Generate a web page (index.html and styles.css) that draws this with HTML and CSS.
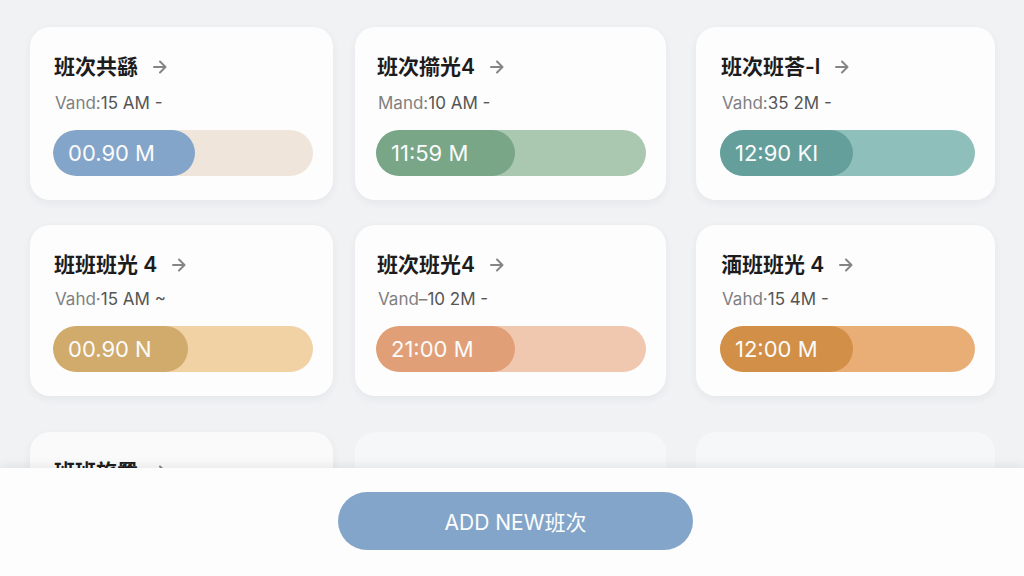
FILE: index.html
```html
<!DOCTYPE html>
<html lang="zh">
<head>
    <meta charset="UTF-8">
    <meta name="viewport" content="width=device-width, initial-scale=1.0">
    <title>班次</title>
    <link rel="stylesheet" href="styles.css">
</head>
<body>

    <svg class="sprite" aria-hidden="true">
        <symbol id="arrow" viewBox="0 0 14 14">
            <path d="M1 7h11M7 1.500l5.500 5.500l-5.500 5.500" fill="none" stroke="currentColor" stroke-width="2" stroke-linecap="round" stroke-linejoin="round"/>
        </symbol>
    </svg>

    <main class="shifts">
        <section class="shift-row">
            <article class="shift-card">
                <h2>班次共繇 <a href="#shift-1" aria-label="Open"><svg><use href="#arrow"/></svg></a></h2>
                <p class="meta">Vand:<span>15 AM -</span></p>
                <div class="bar blue"><div class="fill" style="width: 54.6%">00.90 M</div></div>
            </article>
            <article class="shift-card">
                <h2>班次擶光4 <a href="#shift-2" aria-label="Open"><svg><use href="#arrow"/></svg></a></h2>
                <p class="meta">Mand:<span>10 AM -</span></p>
                <div class="bar green"><div class="fill" style="width: 51.3%">11:59 M</div></div>
            </article>
            <article class="shift-card">
                <h2>班次班荅-l <a href="#shift-3" aria-label="Open"><svg><use href="#arrow"/></svg></a></h2>
                <p class="meta">Vahd:<span>35 2M -</span></p>
                <div class="bar teal"><div class="fill" style="width: 52%">12:90 KI</div></div>
            </article>
        </section>

        <section class="shift-row compact">
            <article class="shift-card">
                <h2>班班班光 4 <a href="#shift-4" aria-label="Open"><svg><use href="#arrow"/></svg></a></h2>
                <p class="meta">Vahd·<span>15 AM ~</span></p>
                <div class="bar gold"><div class="fill" style="width: 52%">00.90 N</div></div>
            </article>
            <article class="shift-card">
                <h2>班次班光4 <a href="#shift-5" aria-label="Open"><svg><use href="#arrow"/></svg></a></h2>
                <p class="meta">Vand–<span>10 2M -</span></p>
                <div class="bar coral"><div class="fill" style="width: 51.3%">21:00 M</div></div>
            </article>
            <article class="shift-card">
                <h2>湎班班光 4 <a href="#shift-6" aria-label="Open"><svg><use href="#arrow"/></svg></a></h2>
                <p class="meta">Vahd·<span>15 4M -</span></p>
                <div class="bar orange"><div class="fill" style="width: 52%">12:00 M</div></div>
            </article>
        </section>

        <section class="shift-row upcoming">
            <article class="shift-card">
                <h2>班班旅羀 <a href="#shift-7" aria-label="Open"><svg><use href="#arrow"/></svg></a></h2>
            </article>
            <article class="shift-card empty"></article>
            <article class="shift-card empty"></article>
        </section>
    </main>

    <footer class="action-bar">
        <button type="button" class="add-btn">ADD NEW班次</button>
    </footer>

</body>
</html>
```

FILE: styles.css
```css
* {
    box-sizing: border-box;
}

body {
    margin: 0;
    height: 100vh;
    display: flex;
    flex-direction: column;
    overflow: hidden;
    font-family: Inter, "Noto Sans CJK SC", sans-serif;
    background: #f1f2f4;
    color: #1c1c1c;
}

.sprite {
    display: none;
}

.shifts {
    flex: 1;
    min-height: 0;
    overflow: hidden;
    padding: 27px 29px 0 30px;
}

/* Cards sit in the odd tracks, the fixed tracks are the gutters */
.shift-row {
    display: grid;
    grid-template-columns: 303fr 22px 311fr 30px 299fr;
    margin-bottom: 25px;
}

.shift-card {
    grid-column: 1;
    grid-row: 1;
    padding: 27px 20px 24px 23px;
    border-radius: 20px;
    background: #fdfdfd;
    box-shadow: 0 3px 8px rgba(40, 50, 70, 0.06);
}

.shift-card:nth-child(2) {
    grid-column: 3;
    padding-left: 21px;
}

.shift-card:nth-child(3) {
    grid-column: 5;
    padding-left: 24px;
}

.shift-card h2 {
    display: flex;
    align-items: center;
    gap: 15px;
    margin: 0;
    padding-left: 1px;
    font-size: 21px;
    font-weight: 600;
    line-height: 26px;
    white-space: nowrap;
}

.shift-card h2 a {
    display: flex;
    color: #858585;
}

.shift-card h2 svg {
    width: 14px;
    height: 14px;
}

.meta {
    margin: 12px 0 16px;
    padding-left: 2px;
    font-size: 17px;
    line-height: 22px;
    color: #808080;
}

.meta span {
    color: #555;
}

.bar {
    height: 46px;
    border-radius: 23px;
    overflow: hidden;
}

.fill {
    height: 100%;
    padding-left: 15px;
    border-radius: 23px;
    font-size: 22px;
    line-height: 46px;
    white-space: nowrap;
    color: #fbfbfb;
}

.blue { background: #efe5da; }
.blue .fill { background: #84a5ca; }

.green { background: #a9c8af; }
.green .fill { background: #78a687; }

.teal { background: #8fbfba; }
.teal .fill { background: #649f9b; }

.gold { background: #f0d2a5; }
.gold .fill { background: #d1ab6c; }

.coral { background: #f0c8b0; }
.coral .fill { background: #e19f78; }

.orange { background: #e9ae76; }
.orange .fill { background: #d28f47; }

/* Second row is a little tighter */
.compact {
    margin-bottom: 36px;
}

.compact .meta {
    margin: 10px 0 16px;
}

.upcoming .shift-card {
    height: 172px;
    background: #fafafa;
}

.upcoming .empty {
    background: #f6f7f8;
    box-shadow: none;
}

.action-bar {
    position: relative;
    display: flex;
    justify-content: center;
    padding: 24px 0 26px 7px;
    background: #fdfdfd;
    box-shadow: 0 -2px 10px rgba(0, 0, 0, 0.08);
}

.add-btn {
    width: 35%;
    height: 58px;
    border: none;
    border-radius: 29px;
    background: #84a5ca;
    color: #fdfdfd;
    font-family: inherit;
    font-size: 21px;
    cursor: pointer;
}
```
